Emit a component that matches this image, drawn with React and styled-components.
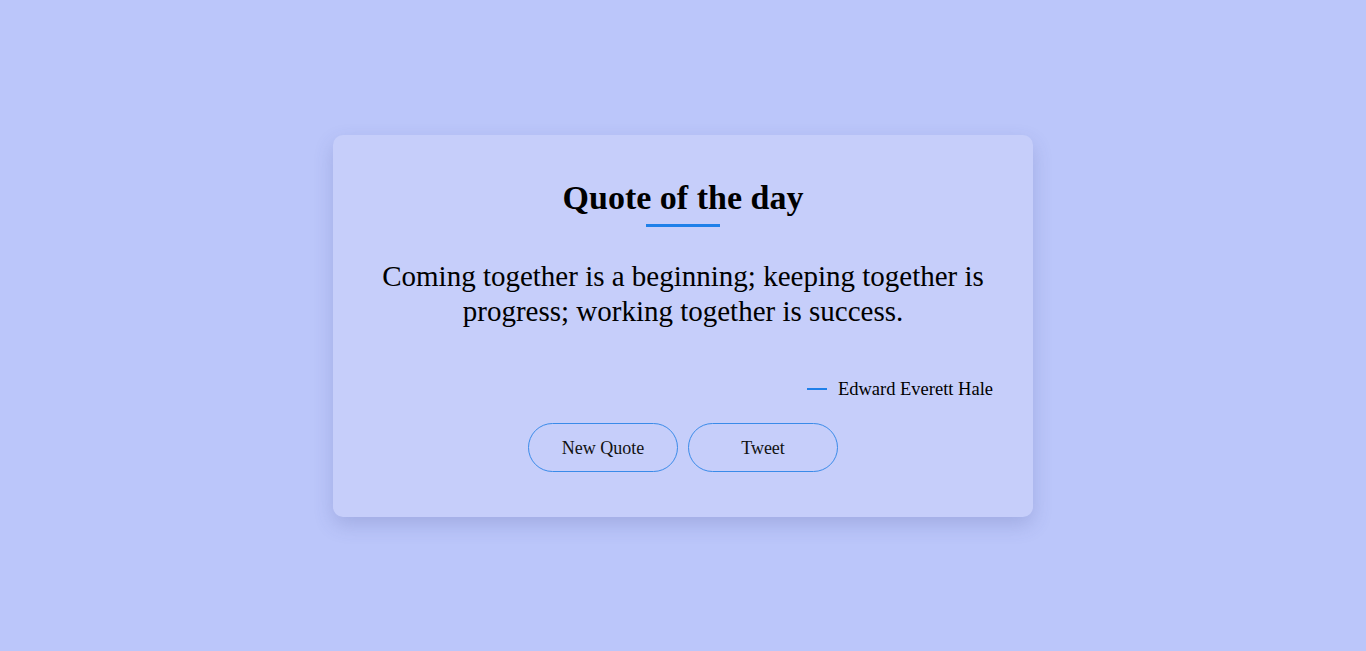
import React from 'react';
import styled, { createGlobalStyle } from 'styled-components';

const GlobalStyle = createGlobalStyle`
  html, body {
    margin: 0;
    padding: 0;
    height: 100%;
  }
  body {
    background: #bbc6fa;
    font-family: 'Liberation Serif', 'DejaVu Serif', serif;
  }
  #root {
    height: 100%;
  }
`;

const Page = styled.main`
  display: flex;
  justify-content: center;
  align-items: center;
  height: 651px;
`;

const Card = styled.section`
  box-sizing: border-box;
  width: 700px;
  padding: 40px 40px 45px;
  background: #c6cefa;
  border-radius: 10px;
  box-shadow: 0 8px 20px rgba(60, 70, 140, 0.2);
  display: flex;
  flex-direction: column;
  align-items: center;
  color: #000;
`;

const Title = styled.h1`
  margin: 0;
  font-size: 34px;
  line-height: 45px;
  font-weight: 700;
`;

const Underline = styled.div`
  margin-top: 4px;
  width: 74px;
  height: 3px;
  background: #1f80e9;
`;

const Quote = styled.p`
  margin: 32px 0 0;
  font-size: 29px;
  line-height: 35px;
  text-align: center;
`;

const Author = styled.div`
  align-self: flex-end;
  margin-top: 48px;
  display: flex;
  align-items: center;
  gap: 11px;
  font-size: 18.5px;
  line-height: 24px;
  &::before {
    content: '';
    width: 20px;
    height: 2px;
    background: #1f80e9;
  }
`;

const Actions = styled.div`
  margin-top: 22px;
  display: flex;
  gap: 10px;
`;

const Button = styled.button`
  box-sizing: border-box;
  width: 150px;
  height: 49px;
  padding: 3px 0 0;
  border: 1px solid #3a8be9;
  border-radius: 25px;
  background: transparent;
  font-family: inherit;
  font-size: 18px;
  color: #111;
  cursor: pointer;
`;

export default function App() {
  return (
    <>
      <GlobalStyle />
      <Page>
        <Card>
          <Title>Quote of the day</Title>
          <Underline />
          <Quote>
            Coming together is a beginning; keeping together is progress; working together is success.
          </Quote>
          <Author>Edward Everett Hale</Author>
          <Actions>
            <Button>New Quote</Button>
            <Button>Tweet</Button>
          </Actions>
        </Card>
      </Page>
    </>
  );
}
